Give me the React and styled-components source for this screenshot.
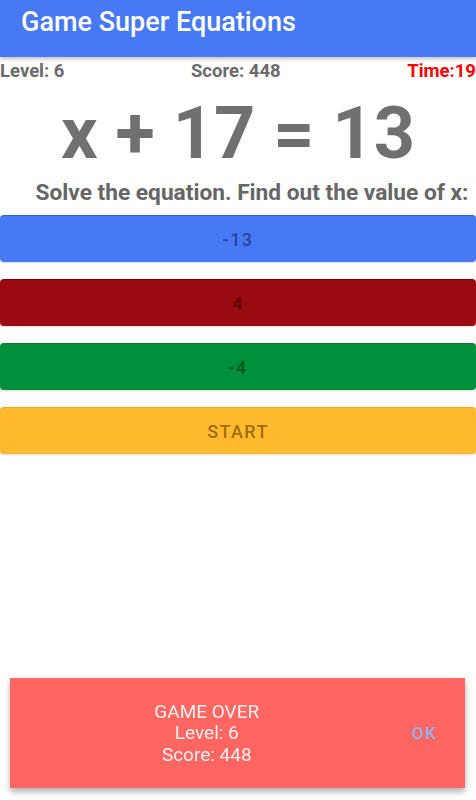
import React from "react";
import styled, { createGlobalStyle } from "styled-components";

const GlobalStyle = createGlobalStyle`
  body {
    margin: 0;
    background: #ffffff;
    font-family: Roboto, "Liberation Sans", sans-serif;
  }
`;

const answers = [
  { value: "-13", bg: "#4779f4", edge: "#2a5fe0", ink: "rgba(20, 40, 110, 0.65)" },
  { value: "4", bg: "#990a11", edge: "#7a0409", ink: "rgba(60, 0, 0, 0.7)" },
  { value: "-4", bg: "#008f3a", edge: "#0b7a33", ink: "rgba(0, 60, 20, 0.7)" },
];

const App = () => {
  return (
    <Page>
      <GlobalStyle />
      <AppBar>
        <Title>Game Super Equations</Title>
      </AppBar>
      <Stats>
        <Stat>Level: 6</Stat>
        <Stat>Score: 448</Stat>
        <Stat $alert>Time:19</Stat>
      </Stats>
      <Equation>x + 17 = 13</Equation>
      <Prompt>Solve the equation. Find out the value of x:</Prompt>
      <Buttons>
        {answers.map((a) => (
          <AnswerButton key={a.value} $bg={a.bg} $edge={a.edge} $ink={a.ink}>
            {a.value}
          </AnswerButton>
        ))}
        <AnswerButton $bg="#feb92c" $edge="#f5ad10" $ink="rgba(90, 60, 0, 0.6)">
          START
        </AnswerButton>
      </Buttons>
      <Snackbar>
        <SnackText>
          GAME OVER
          <br />
          Level: 6
          <br />
          Score: 448
        </SnackText>
        <SnackAction>OK</SnackAction>
      </Snackbar>
    </Page>
  );
};

export default App;

const Page = styled.div`
  width: 476px;
  min-height: 800px;
`;

const AppBar = styled.header`
  height: 57px;
  background: #4779f4;
  display: flex;
  align-items: center;
  padding: 0 21px;
  box-sizing: border-box;
  box-shadow: 0 2px 4px rgba(0, 0, 0, 0.25);
  position: relative;
`;

const Title = styled.h1`
  margin: 0 0 13px;
  color: #ffffff;
  font-size: 27px;
  font-weight: 500;
`;

const Stats = styled.div`
  display: flex;
  justify-content: space-between;
  padding: 2px 0 0;
  height: 27px;
  box-sizing: border-box;
`;

const Stat = styled.span`
  font-size: 18.5px;
  font-weight: 700;
  line-height: 24px;
  color: ${(p) => (p.$alert ? "#ff0000" : "#6b6b6b")};
`;

const Equation = styled.div`
  text-align: center;
  font-size: 72px;
  font-weight: 700;
  line-height: 92px;
  color: #707070;
  margin-top: 4px;
`;

const Prompt = styled.div`
  text-align: center;
  font-size: 22.7px;
  font-weight: 700;
  line-height: 28px;
  color: #666666;
  margin-top: -1px;
  padding-left: 28px;
`;

const Buttons = styled.div`
  display: flex;
  flex-direction: column;
  gap: 17px;
  margin-top: 8px;
`;

const AnswerButton = styled.button`
  height: 47px;
  width: 100%;
  border: none;
  border-top: 1px solid ${(p) => p.$edge};
  border-radius: 4px;
  background: ${(p) => p.$bg};
  color: ${(p) => p.$ink};
  font-family: Roboto, "Liberation Sans", sans-serif;
  font-size: 18px;
  font-weight: 500;
  letter-spacing: 1.4px;
  box-shadow: 0 1px 2px rgba(0, 0, 0, 0.15);
`;

const Snackbar = styled.div`
  position: fixed;
  left: 10px;
  right: 11px;
  bottom: 12px;
  height: 110px;
  background: #ff6661;
  display: flex;
  align-items: center;
  justify-content: space-between;
  box-shadow: 0 4px 6px rgba(0, 0, 0, 0.3);
`;

const SnackText = styled.div`
  flex: 1;
  text-align: center;
  color: #fff0ef;
  font-size: 19px;
  font-weight: 400;
  line-height: 21.5px;
  padding-left: 32px;
`;

const SnackAction = styled.div`
  color: #8ab4f8;
  font-size: 17px;
  font-weight: 500;
  letter-spacing: 1.5px;
  padding: 0 28px 0 40px;
`;
